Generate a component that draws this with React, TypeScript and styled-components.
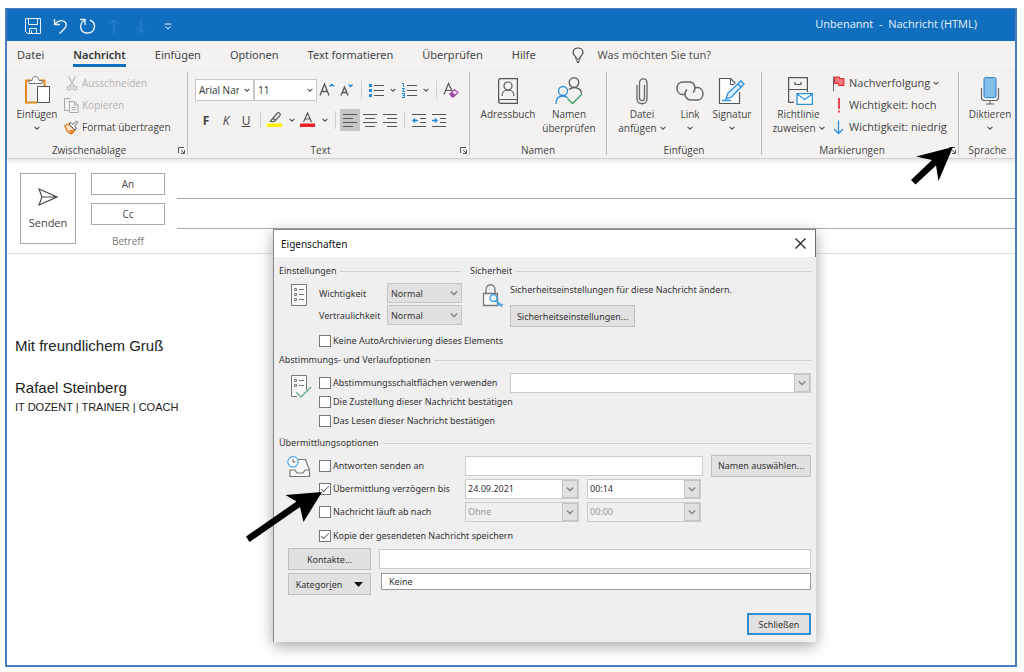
import React from 'react';
import styled, { createGlobalStyle, css } from 'styled-components';

const ui = '"Open Sans", "Noto Sans", sans-serif';
const dialogFont = '"Noto Sans", "Open Sans", sans-serif';

const GlobalStyle = createGlobalStyle`
  *, *::before, *::after { box-sizing: border-box; }
  body { margin: 0; background: #fff; font-family: ${ui}; color: #444; }
  button, input, select { font: inherit; color: inherit; margin: 0; }
`;

/* ---------- window frame ---------- */

const Page = styled.div`
  position: relative;
  min-height: 100vh;
  padding: 8px 7px 5px 5px;
  display: flex;
  overflow: hidden;
`;

const MailWindow = styled.main`
  flex: 1;
  min-width: 0;
  border: 2px solid #4a7ebb;
  border-top-width: 1px;
  background: #fff;
  display: flex;
  flex-direction: column;
`;

const TitleBar = styled.header`
  height: 32px;
  background: #106ebe;
  color: #e6f1fa;
  display: flex;
  align-items: center;
  justify-content: space-between;
  padding: 0 38px 0 16px;
  font-size: 11px;
`;

const QuickAccess = styled.div`
  display: flex;
  align-items: center;
  gap: 7px;
  padding-top: 2px;
`;

const plainButton = css`
  border: 0;
  background: none;
  padding: 0;
  display: flex;
  align-items: center;
  justify-content: center;
`;

const QuickButton = styled.button<{ $dim?: boolean }>`
  ${plainButton}
  width: 20px;
  height: 20px;
  color: ${p => (p.$dim ? '#2f84cf' : '#e6f1fa')};
`;

const WindowTitle = styled.h1`
  margin: 0;
  padding-bottom: 2px;
  font-size: 11px;
  font-weight: 400;
  line-height: 16px;
  white-space: pre;
`;

/* ---------- tabs ---------- */

const Tabs = styled.nav`
  height: 31px;
  background: #f3f2f1;
  display: flex;
  align-items: flex-start;
  padding: 6px 0 0 10px;
  gap: 29px;
  font-family: ${dialogFont};
  font-size: 11px;
  line-height: 16px;
  white-space: nowrap;
  overflow: hidden;
`;

const Tab = styled.a<{ $active?: boolean }>`
  color: ${p => (p.$active ? '#333' : '#444')};
  font-weight: ${p => (p.$active ? 600 : 400)};
  text-decoration: none;
  padding-bottom: 1px;
  border-bottom: 3px solid ${p => (p.$active ? '#106ebe' : 'transparent')};
`;

const Search = styled.a`
  display: flex;
  align-items: center;
  gap: 14px;
  margin-left: 7px;
  color: #555;
  text-decoration: none;
`;

/* ---------- ribbon ---------- */

const Ribbon = styled.section`
  height: 87px;
  flex: none;
  background: #f3f2f1;
  display: flex;
  border-bottom: 1px solid #d0cfce;
  box-shadow: 0 2px 5px rgba(0, 0, 0, 0.12);
  font-size: 10px;
`;

const Group = styled.div<{ $width?: number }>`
  ${p => (p.$width ? `flex: 0 0 ${p.$width}px;` : 'flex: 1 0 0;')}
  height: 83px;
  border-right: ${p => (p.$width ? '1px solid #bbb' : '0')};
  display: flex;
  flex-direction: column;
`;

const GroupBody = styled.div<{ $pad?: number; $gap?: number }>`
  flex: none;
  height: 71px;
  display: flex;
  align-items: flex-start;
  padding-left: ${p => p.$pad ?? 0}px;
  gap: ${p => p.$gap ?? 0}px;
`;

const GroupFooter = styled.div`
  flex: none;
  display: flex;
  align-items: center;
  line-height: 14px;
  height: 14px;
  text-align: center;
`;

const GroupName = styled.span`
  flex: 1;
`;

const Launcher = styled.button`
  ${plainButton}
  width: 16px;
  height: 12px;
  padding-left: 4px;
  color: #555;
`;

const BigButton = styled.button<{ $width: number }>`
  ${plainButton}
  flex-direction: column;
  justify-content: flex-start;
  width: ${p => p.$width}px;
  padding-top: 3px;
  line-height: 14px;
  white-space: nowrap;
`;

const BigIcon = styled.span`
  height: 32px;
  display: flex;
  align-items: center;
`;

const LabelLine = styled.span`
  display: flex;
  align-items: center;
  gap: 3px;
  height: 14px;
`;

const SmallColumn = styled.div<{ $size?: number }>`
  display: flex;
  flex-direction: column;
  font-size: ${p => p.$size ?? 10}px;
`;

const SmallButton = styled.button`
  ${plainButton}
  justify-content: flex-start;
  gap: 3px;
  height: 22px;
  line-height: 14px;
  white-space: nowrap;
  &:disabled { color: #b1b0af; }
`;

const SmallIcon = styled.span`
  width: 15px;
  display: flex;
  justify-content: center;
`;

const TextTools = styled.div`
  display: flex;
  flex-direction: column;
  padding-top: 7px;
  gap: 8px;
`;

const ToolRow = styled.div<{ $inset?: boolean }>`
  display: flex;
  align-items: center;
  height: 22px;
  padding-left: ${p => (p.$inset ? 1 : 0)}px;
`;

const Tool = styled.button<{ $narrow?: boolean; $on?: boolean }>`
  ${plainButton}
  width: ${p => (p.$narrow ? 13 : 20)}px;
  height: 22px;
  font-size: 12px;
  background: ${p => (p.$on ? '#c8c6c4' : 'none')};
`;

const Divider = styled.span`
  width: 1px;
  height: 18px;
  background: #d2d0ce;
  margin: 0 4px;
`;

const SelectWrap = styled.span<{ $width?: number }>`
  display: inline-grid;
  width: ${p => (p.$width ? `${p.$width}px` : '100%')};
  align-items: center;
  > * { grid-area: 1 / 1; }
  > svg { justify-self: end; margin-right: 4px; pointer-events: none; }
`;

const RibbonSelect = styled.select`
  appearance: none;
  width: 100%;
  height: 22px;
  border: 1px solid #c8c6c4;
  border-radius: 0;
  background: #fff;
  padding: 0 14px 0 3px;
  color: #333;
  font-size: 10px;
`;

/* ---------- message header ---------- */

const Compose = styled.section`
  display: flex;
  padding: 10px 0 0 13px;
  gap: 15px;
  border-bottom: 1px solid #e1dfdd;
`;

const SendButton = styled.button`
  width: 56px;
  height: 71px;
  margin-top: 4px;
  border: 1px solid #aaa;
  background: #fff;
  padding: 0;
  display: flex;
  flex-direction: column;
  align-items: center;
  justify-content: center;
  gap: 10px;
  font-size: 11px;
  line-height: 14px;
`;

const Fields = styled.div`
  flex: 1;
`;

const FieldRow = styled.div<{ $last?: boolean }>`
  display: flex;
  align-items: center;
  gap: 12px;
  height: ${p => (p.$last ? 24 : 30)}px;
`;

const FieldButton = styled.button`
  width: 74px;
  height: 22px;
  border: 1px solid #aaa;
  background: #fff;
  padding: 0;
  font-size: 10px;
`;

const FieldLabel = styled.label`
  width: 74px;
  text-align: center;
  font-size: 10px;
  color: #777;
`;

const FieldInput = styled.input<{ $line?: boolean }>`
  flex: 1;
  align-self: stretch;
  border: 0;
  border-bottom: ${p => (p.$line ? '1px solid #ababab' : '0')};
  background: transparent;
  outline: 0;
`;

const Message = styled.article`
  padding: 81px 8px 0;
  font-family: "Liberation Sans Narrow", "Arial Narrow", "Liberation Sans", sans-serif;
  color: #222;
`;

const Line = styled.p<{ $small?: boolean }>`
  margin: 0;
  min-height: 21px;
  font-size: ${p => (p.$small ? 11 : 15)}px;
  line-height: ${p => (p.$small ? 18 : 21)}px;
`;

/* ---------- properties dialog ---------- */

const Dialog = styled.div`
  position: absolute;
  left: 273px;
  top: 229px;
  width: 543px;
  border: 1px solid #888;
  border-width: 1px 0 0 1px;
  background: #efefef;
  box-shadow: 0 4px 14px rgba(0, 0, 0, 0.35);
  font-family: ${dialogFont};
  font-size: 9px;
  color: #333;
`;

const DialogTitle = styled.div`
  height: 27px;
  background: #fff;
  border-right: 1px solid #666;
  display: flex;
  align-items: center;
  justify-content: space-between;
  padding: 0 9px 0 7px;
`;

const DialogName = styled.h2`
  margin: 0;
  font-size: 10px;
  font-weight: 400;
  color: #111;
`;

const CloseButton = styled.button`
  ${plainButton}
  width: 12px;
  height: 12px;
  color: #222;
`;

const DialogBody = styled.form`
  padding: 6px 5px 7px 5px;
`;

const TopPair = styled.div`
  display: grid;
  grid-template-columns: 182px 1fr;
  column-gap: 9px;
`;

const Heading = styled.h3`
  margin: 0;
  height: 16px;
  display: flex;
  align-items: center;
  gap: 4px;
  font-size: 9px;
  line-height: 16px;
  font-weight: 400;
  white-space: nowrap;
  &::after { content: ''; flex: 1; height: 1px; background: #cfcfcf; }
`;

const Section = styled.div<{ $top?: number }>`
  display: flex;
  padding-top: ${p => p.$top ?? 3}px;
`;

const SectionIcon = styled.div<{ $left?: number }>`
  flex: 0 0 40px;
  padding: 2px 0 0 ${p => p.$left ?? 12}px;
`;

const Stack = styled.div`
  flex: 1;
  min-width: 0;
`;

const Pair = styled.div`
  display: grid;
  grid-template-columns: 68px 75px;
  grid-auto-rows: 22px;
  align-items: center;
  white-space: nowrap;
`;

const GraySelect = styled.select`
  appearance: none;
  width: 100%;
  height: 20px;
  border: 1px solid #c3c3c3;
  border-radius: 0;
  background: #e1e1e1;
  padding: 0 14px 0 3px;
`;

const SecurityText = styled.p`
  margin: 0 0 7px;
  line-height: 16px;
  white-space: nowrap;
`;

const PushButton = styled.button<{ $width?: number; $primary?: boolean }>`
  ${plainButton}
  width: ${p => (p.$width ? `${p.$width}px` : 'auto')};
  height: 22px;
  background: #e1e1e1;
  border: ${p => (p.$primary ? '2px solid #2f8fdb' : '1px solid #c0c0c0')};
  white-space: nowrap;
  gap: 12px;
`;

const Row = styled.div<{ $h: number; $gap?: number }>`
  display: flex;
  align-items: center;
  height: ${p => p.$h}px;
  gap: ${p => p.$gap ?? 8}px;
`;

const CheckLabel = styled.label<{ $width?: number }>`
  display: flex;
  align-items: center;
  gap: 2px;
  flex: none;
  ${p => p.$width && `width: ${p.$width}px;`}
  white-space: nowrap;
  line-height: 14px;
`;

const CheckBox = styled.input`
  appearance: none;
  width: 12px;
  height: 12px;
  border: 1px solid #777;
  background: #fff;
  display: grid;
  place-items: center;
  &:checked::before {
    content: '';
    width: 8px;
    height: 4px;
    border: solid #666;
    border-width: 0 0 1px 1px;
    transform: translateY(-1px) rotate(-45deg);
  }
`;

const TextBox = styled.input<{ $width?: number; $listed?: boolean }>`
  ${p => (p.$width ? `flex: 0 0 ${p.$width}px;` : 'flex: 1;')}
  min-width: 0;
  height: ${p => (p.$listed ? 17 : 20)}px;
  align-self: ${p => (p.$listed ? 'flex-start' : 'center')};
  border: 1px solid ${p => (p.$listed ? '#999' : '#cbcbcb')};
  background: #fff;
  padding: 0 7px;
`;

const Combo = styled.span<{ $width?: number }>`
  ${p => (p.$width ? `flex: 0 0 ${p.$width}px;` : 'flex: 1;')}
  min-width: 0;
  height: 20px;
  border: 1px solid #cbcbcb;
  display: flex;
  background: #fff;
  &:has(input:disabled) { background: #efefef; }
`;

const ComboInput = styled.input`
  flex: 1;
  min-width: 0;
  border: 0;
  padding: 0 2px;
  background: transparent;
  outline: 0;
  &:disabled { color: #999; }
`;

const ComboButton = styled.button`
  ${plainButton}
  flex: 0 0 16px;
  background: #e1e1e1;
  border: 1px solid #c3c3c3;
`;

const Linked = styled.div`
  padding: 0 0 0 9px;
  display: flex;
  flex-direction: column;
  gap: 3px;
`;

const DialogFooter = styled.div`
  display: flex;
  justify-content: flex-end;
  margin-top: 18px;
`;

const Pointer = styled.svg`
  position: absolute;
  pointer-events: none;
  fill: #000;
`;

/* ---------- small drawings ---------- */

const Chevron = ({ size = 6, color = '#555' }: { size?: number; color?: string }) => (
  <svg width={size} height={size} viewBox="0 0 6 6" fill="none" stroke={color} strokeWidth="1.1">
    <path d="M0.6 1.8 3 4.2 5.4 1.8" />
  </svg>
);

const LaunchIcon = () => (
  <svg width="9" height="9" viewBox="0 0 9 9" fill="none" stroke="currentColor">
    <path d="M1.5 7V1.5H7M4 4l3.5 3.5M7.500 4v3.500H4" />
  </svg>
);

const lineRows = {
  left: 'M0 1.500h14M0 5.500h10M0 9.500h14M0 13.500h10',
  center: 'M0 1.500h14M2 5.500h10M0 9.500h14M2 13.500h10',
  right: 'M0 1.500h14M4 5.500h10M0 9.500h14M4 13.500h10',
  out: 'M0 1.500h14M8 5.500h6M8 9.500h6M0 13.500h14',
  in: 'M0 1.500h14M8 5.500h6M8 9.500h6M0 13.500h14',
};

const Lines = ({ kind }: { kind: keyof typeof lineRows }) => (
  <svg width="14" height="15" viewBox="0 0 14 15" fill="none" stroke="#555">
    <path d={lineRows[kind]} />
    {kind === 'out' && <path d="M6 7.500H1M3 5.500l-2 2 2 2" stroke="#1e88d8" strokeWidth="1.3" />}
    {kind === 'in' && <path d="M0 7.500h5M3 5.500l2 2-2 2" stroke="#1e88d8" strokeWidth="1.3" />}
  </svg>
);

const ListIcon = ({ check }: { check?: boolean }) => (
  <svg width="22" height="24" viewBox="0 0 22 24" fill="none" stroke="#777">
    <path d={check ? 'M6 21.500H0.500V0.500h15V15' : 'M0.500 0.500h15v21H0.500z'} fill="#f8f8f8" />
    <path d="M3.500 4.500h2v2h-2zM3.500 9.500h2v2h-2zM8 5.500h5M8 10.500h5" />
    {check ? (
      <path d="M5 17l5 5L20 12" stroke="#6db68a" strokeWidth="1.5" />
    ) : (
      <path d="M3.500 14.500h2v2h-2zM8 15.500h5" />
    )}
  </svg>
);

const Launch = ({ name }: { name: string }) => (
  <Launcher type="button" aria-label={name}><LaunchIcon /></Launcher>
);

type ComboFieldProps = { width?: number; value: string; label: string; disabled?: boolean };
const ComboField = ({ width, value, label, disabled }: ComboFieldProps) => (
  <Combo $width={width}>
    <ComboInput aria-label={label} defaultValue={value} disabled={disabled} />
    <ComboButton type="button" aria-label={`${label} öffnen`}><Chevron size={8} color="#888" /></ComboButton>
  </Combo>
);

type CheckProps = { children: React.ReactNode; checked?: boolean; width?: number };
const Check = ({ children, checked, width }: CheckProps) => (
  <CheckLabel $width={width}>
    <CheckBox type="checkbox" defaultChecked={checked} />
    {children}
  </CheckLabel>
);

const tabs = ['Datei', 'Nachricht', 'Einfügen', 'Optionen', 'Text formatieren', 'Überprüfen', 'Hilfe'];

const MailRibbon = () => (
  <Ribbon>
    <Group $width={181}>
      <GroupBody $pad={6} $gap={3}>
        <BigButton type="button" $width={48}>
          <BigIcon>
            <svg width="28" height="32" viewBox="0 0 28 32" fill="none">
              <path d="M8 5.500H3v22h11M17 5.500h4.500V11" stroke="#e08a1e" strokeWidth="2" />
              <path d="M6 8.500V5.500h3C9 3 10.500 1.500 12.500 1.500s3.500 1.500 3.500 4h3v3z" fill="#fff" stroke="#777" />
              <path d="M14.500 11.500h12v16h-12z" fill="#fff" stroke="#555" />
            </svg>
          </BigIcon>
          <LabelLine>Einfügen</LabelLine>
          <LabelLine><Chevron /></LabelLine>
        </BigButton>
        <SmallColumn>
          <SmallButton type="button" disabled>
            <SmallIcon>
              <svg width="12" height="15" viewBox="0 0 12 15" fill="none" stroke="#aaa">
                <path d="M2.500 0.500 8 10.500M9.500 0.500 4 10.500" />
                <circle cx="3" cy="12" r="2" /><circle cx="9" cy="12" r="2" />
              </svg>
            </SmallIcon>
            Ausschneiden
          </SmallButton>
          <SmallButton type="button" disabled>
            <SmallIcon>
              <svg width="15" height="15" viewBox="0 0 15 15" fill="none" stroke="#aaa">
                <path d="M5 12.500H0.500V0.500h6M4.500 3.500h6l3.500 3.500v7.500H5.500V3.500M10.500 3.500V7H14M7.500 9.500h4M7.500 11.500h4" />
              </svg>
            </SmallIcon>
            Kopieren
          </SmallButton>
          <SmallButton type="button">
            <SmallIcon>
              <svg width="15" height="15" viewBox="0 0 15 15" fill="none">
                <path d="M1 5.500 5 4l6 6-3.500 4C4 13 2 10 1 5.500z" fill="#fbe3c2" stroke="#d9761c" strokeWidth="1.3" />
                <path d="M5 10l2 3.500 3-3.500z" fill="#e8821e" />
                <path d="M5 4l2-1.500 2 2L12.500 1 14 2.500 10.500 6l2 2L11 10z" fill="#fff" stroke="#555" />
              </svg>
            </SmallIcon>
            Format übertragen
          </SmallButton>
        </SmallColumn>
      </GroupBody>
      <GroupFooter><GroupName>Zwischenablage</GroupName><Launch name="Zwischenablage öffnen" /></GroupFooter>
    </Group>

    <Group $width={282}>
      <GroupBody $pad={7}>
        <TextTools>
          <ToolRow>
            <SelectWrap $width={59}>
              <RibbonSelect aria-label="Schriftart"><option>Arial Narrow</option></RibbonSelect>
              <Chevron />
            </SelectWrap>
            <SelectWrap $width={63}>
              <RibbonSelect aria-label="Schriftgrad"><option>11</option></RibbonSelect>
              <Chevron />
            </SelectWrap>
            <Tool type="button" aria-label="Schrift vergrößern">
              <svg width="16" height="16" viewBox="0 0 16 16" fill="none" stroke="#555" strokeWidth="1.300">
                <path d="M1 13.500 5.500 2 10 13.500M2.500 9.500h6" />
                <path d="M10.500 4.500l2.200-2.200 2.200 2.200" stroke="#1e88d8" />
              </svg>
            </Tool>
            <Tool type="button" aria-label="Schrift verkleinern">
              <svg width="16" height="16" viewBox="0 0 16 16" fill="none" stroke="#555" strokeWidth="1.300">
                <path d="M2 13.500 5.500 5 9 13.500M3.200 10.500h4.600" />
                <path d="M9.500 2.500l2 2 2-2" stroke="#1e88d8" />
              </svg>
            </Tool>
            <Divider />
            <Tool type="button" aria-label="Aufzählungszeichen">
              <svg width="15" height="15" viewBox="0 0 15 15" fill="none">
                <path d="M5 2.500h10M5 7.500h10M5 12.500h10" stroke="#555" />
                <path d="M0 1h3v3H0zM0 6h3v3H0zM0 11h3v3H0z" fill="#1e88d8" />
              </svg>
            </Tool>
            <Tool type="button" $narrow aria-label="Aufzählung wählen"><Chevron /></Tool>
            <Tool type="button" aria-label="Nummerierung">
              <svg width="15" height="15" viewBox="0 0 15 15" fill="none">
                <path d="M5 2.500h10M5 7.500h10M5 12.500h10" stroke="#555" />
                <path d="M0 0.500h1.500V4M0 5.500h2.500L0.500 8.500H3M0 10.500h2.500v4H0M0.500 12.500h2" stroke="#1e88d8" />
              </svg>
            </Tool>
            <Tool type="button" $narrow aria-label="Nummerierung wählen"><Chevron /></Tool>
            <Divider />
            <Tool type="button" aria-label="Formatierung löschen">
              <svg width="16" height="16" viewBox="0 0 16 16" fill="none" stroke="#555" strokeWidth="1.200">
                <path d="M1 12.500 5.500 1.500 9 9M2.500 8.500h5.500" />
                <path d="M7 12l4.500-4.500 3.500 3L10.500 15H9z" stroke="#a349a4" fill="#f3e4f3" />
                <path d="M7 12l2-2 3.500 3-2 2H9z" fill="#a349a4" stroke="none" />
              </svg>
            </Tool>
          </ToolRow>
          <ToolRow $inset>
            <Tool type="button"><b>F</b></Tool>
            <Tool type="button"><i>K</i></Tool>
            <Tool type="button"><u>U</u></Tool>
            <Divider />
            <Tool type="button" aria-label="Texthervorhebung">
              <svg width="16" height="16" viewBox="0 0 16 16" fill="none">
                <path d="M4 8.500 10.500 1c1-1 3.500 0.500 2.500 2.500L7.500 9.500H3.500L4 8.500M6 6.500l3 2" stroke="#555" strokeWidth="1.200" />
                <path d="M0 11.500h15V15H0z" fill="#fff200" />
              </svg>
            </Tool>
            <Tool type="button" $narrow aria-label="Hervorhebungsfarbe"><Chevron /></Tool>
            <Tool type="button" aria-label="Schriftfarbe">
              <svg width="16" height="16" viewBox="0 0 16 16" fill="none">
                <path d="M3.500 10 7.500 1 11.500 10M5 7h5" stroke="#555" strokeWidth="1.200" />
                <path d="M0 11.500h15V15H0z" fill="#ee1c24" />
              </svg>
            </Tool>
            <Tool type="button" $narrow aria-label="Farbe wählen"><Chevron /></Tool>
            <Divider />
            <Tool type="button" $on aria-label="Linksbündig"><Lines kind="left" /></Tool>
            <Tool type="button" aria-label="Zentriert"><Lines kind="center" /></Tool>
            <Tool type="button" aria-label="Rechtsbündig"><Lines kind="right" /></Tool>
            <Divider />
            <Tool type="button" aria-label="Einzug verkleinern"><Lines kind="out" /></Tool>
            <Tool type="button" aria-label="Einzug vergrößern"><Lines kind="in" /></Tool>
          </ToolRow>
        </TextTools>
      </GroupBody>
      <GroupFooter><GroupName>Text</GroupName><Launch name="Textoptionen öffnen" /></GroupFooter>
    </Group>

    <Group $width={137}>
      <GroupBody $pad={7}>
        <BigButton type="button" $width={62}>
          <BigIcon>
            <svg width="20" height="26" viewBox="0 0 20 26" fill="none" stroke="#555" strokeWidth="1.200">
              <path d="M19.400 21.500V0.600H3Q0.600 0.600 0.600 3V23Q0.600 25.400 3 25.400H19.400V21.500H3Q0.600 21.500 0.600 23" />
              <circle cx="10" cy="8" r="4" />
              <path d="M4 18c0-8 12-8 12 0" />
            </svg>
          </BigIcon>
          <LabelLine>Adressbuch</LabelLine>
        </BigButton>
        <BigButton type="button" $width={60}>
          <BigIcon>
            <svg width="28" height="28" viewBox="0 0 28 28" fill="none" strokeWidth="1.300">
              <circle cx="19" cy="5.500" r="4.800" stroke="#555" />
              <path d="M14 12.500c4-3.500 12-2 12.500 4" stroke="#555" />
              <circle cx="8" cy="14" r="4.500" stroke="#2a8fdc" />
              <path d="M1 27c0-5 2.500-8 7-8 2 0 3.500 0.500 4.500 2" stroke="#2a8fdc" />
              <path d="M12.500 21.500l5 5L27 17" stroke="#3a9a5f" />
            </svg>
          </BigIcon>
          <LabelLine>Namen</LabelLine>
          <LabelLine>überprüfen</LabelLine>
        </BigButton>
      </GroupBody>
      <GroupFooter><GroupName>Namen</GroupName></GroupFooter>
    </Group>

    <Group $width={155}>
      <GroupBody $pad={8}>
        <BigButton type="button" $width={54}>
          <BigIcon>
            <svg width="12" height="27" viewBox="0 0 12 27" fill="none" stroke="#666" strokeWidth="1.300">
              <path d="M8.500 7v13c0 3.500-5 3.500-5 0V5c0-5.500 7.500-5.500 7.500 0v15.500c0 7-10 7-10 0V7" />
            </svg>
          </BigIcon>
          <LabelLine>Datei</LabelLine>
          <LabelLine>anfügen<Chevron /></LabelLine>
        </BigButton>
        <BigButton type="button" $width={42}>
          <BigIcon>
            <svg width="28" height="20" viewBox="0 0 28 20" fill="none" stroke="#666" strokeWidth="1.500">
              <path d="M9 13.500H7C-1 13.500-1 1 7 1h6c6 0 7.500 7 4 10.500" />
              <path d="M18 6.500h3c8 0 8 12.500 0 12.500h-6c-6 0-7.500-7-4-10.500" />
            </svg>
          </BigIcon>
          <LabelLine>Link</LabelLine>
          <LabelLine><Chevron /></LabelLine>
        </BigButton>
        <BigButton type="button" $width={42}>
          <BigIcon>
            <svg width="28" height="28" viewBox="0 0 28 28" fill="none">
              <path d="M21.500 15V26.500H1.500V1.500h11l5 5" fill="#fff" stroke="#555" strokeWidth="1.200" />
              <path d="M12.500 1.500v6h4" stroke="#555" />
              <path d="M8 22l2-6L23 4l3 3L13.500 20z" fill="#d9ecfa" stroke="#2a8fdc" strokeWidth="1.300" />
              <path d="M4 23.500h9M20 7l3 3" stroke="#2a8fdc" strokeWidth="1.300" />
            </svg>
          </BigIcon>
          <LabelLine>Signatur</LabelLine>
          <LabelLine><Chevron /></LabelLine>
        </BigButton>
      </GroupBody>
      <GroupFooter><GroupName>Einfügen</GroupName></GroupFooter>
    </Group>

    <Group $width={197}>
      <GroupBody $pad={8} $gap={4}>
        <BigButton type="button" $width={57}>
          <BigIcon>
            <svg width="28" height="28" viewBox="0 0 28 28" fill="none">
              <path d="M9 25.400H3.600V0.600h18.800V15M3.600 12.500h18.800M10 5v2.500h6V5" fill="none" stroke="#555" strokeWidth="1.200" />
              <path d="M12 16.600h15.400v10.800H12z" fill="#fff" stroke="#2a8fdc" strokeWidth="1.300" />
              <path d="M12 17l7.700 5.500L27.400 17" stroke="#2a8fdc" strokeWidth="1.300" />
            </svg>
          </BigIcon>
          <LabelLine>Richtlinie</LabelLine>
          <LabelLine>zuweisen<Chevron /></LabelLine>
        </BigButton>
        <SmallColumn $size={11}>
          <SmallButton type="button">
            <SmallIcon>
              <svg width="12" height="15" viewBox="0 0 12 15">
                <path d="M0.500 0.500V15" stroke="#666" />
                <path d="M1.500 1h5v1.500H11V9.500H5.500V7.500h-4z" fill="#f4777b" stroke="#e3242b" />
              </svg>
            </SmallIcon>
            Nachverfolgung<Chevron />
          </SmallButton>
          <SmallButton type="button">
            <SmallIcon>
              <svg width="4" height="15" viewBox="0 0 4 15" fill="#f0484d"><path d="M1 0h2v11H1zM1 12.500h2v2H1z" /></svg>
            </SmallIcon>
            Wichtigkeit: hoch
          </SmallButton>
          <SmallButton type="button">
            <SmallIcon>
              <svg width="11" height="15" viewBox="0 0 11 15" fill="none" stroke="#2a8fdc" strokeWidth="1.300">
                <path d="M5.500 0.500v13M1 9l4.500 4.500L10 9" />
              </svg>
            </SmallIcon>
            Wichtigkeit: niedrig
          </SmallButton>
        </SmallColumn>
      </GroupBody>
      <GroupFooter><GroupName>Markierungen</GroupName><Launch name="Nachrichtenoptionen" /></GroupFooter>
    </Group>

    <Group>
      <GroupBody $pad={5}>
        <BigButton type="button" $width={52}>
          <BigIcon>
            <svg width="20" height="28" viewBox="0 0 20 28" fill="none">
              <rect x="4" y="0.600" width="12" height="20" rx="1.500" fill="#83bdea" stroke="#2a7fc8" />
              <path d="M1.500 11v9.500q0 3 3 3h11q3 0 3-3V11M10 23.500v3M6 27h8" stroke="#666" strokeWidth="1.200" />
            </svg>
          </BigIcon>
          <LabelLine>Diktieren</LabelLine>
          <LabelLine><Chevron /></LabelLine>
        </BigButton>
      </GroupBody>
      <GroupFooter><GroupName>Sprache</GroupName></GroupFooter>
    </Group>
  </Ribbon>
);

const PropertiesDialog = () => (
  <Dialog role="dialog" aria-labelledby="dialog-title">
    <DialogTitle>
      <DialogName id="dialog-title">Eigenschaften</DialogName>
      <CloseButton type="button" aria-label="Fenster schließen">
        <svg width="11" height="11" viewBox="0 0 11 11" stroke="currentColor" strokeWidth="1.200"><path d="M0.500 0.500l10 10M10.500 0.500l-10 10" /></svg>
      </CloseButton>
    </DialogTitle>
    <DialogBody onSubmit={e => e.preventDefault()}>
      <TopPair>
        <div>
          <Heading>Einstellungen</Heading>
          <Section>
            <SectionIcon><ListIcon /></SectionIcon>
            <Stack>
              <Pair>
                <label htmlFor="importance">Wichtigkeit</label>
                <SelectWrap>
                  <GraySelect id="importance"><option>Normal</option></GraySelect>
                  <Chevron size={8} color="#888" />
                </SelectWrap>
                <label htmlFor="sensitivity">Vertraulichkeit</label>
                <SelectWrap>
                  <GraySelect id="sensitivity"><option>Normal</option></GraySelect>
                  <Chevron size={8} color="#888" />
                </SelectWrap>
              </Pair>
            </Stack>
          </Section>
        </div>
        <div>
          <Heading>Sicherheit</Heading>
          <Section>
            <SectionIcon>
              <svg width="21" height="24" viewBox="0 0 21 24" fill="none">
                <path d="M4 9.500V6c0-7 9-7 9 0v3.500" stroke="#777" strokeWidth="1.300" />
                <path d="M1.500 9.500h14v12h-14z" fill="#fafafa" stroke="#777" strokeWidth="1.300" />
                <circle cx="11.500" cy="14" r="3.500" fill="#e4f2fc" stroke="#4aa3e0" strokeWidth="1.500" />
                <path d="M14 16.500l6 6M17 19.500l-1.500 2M19 21.500l1.500-1.500" stroke="#4aa3e0" strokeWidth="1.800" />
              </svg>
            </SectionIcon>
            <Stack>
              <SecurityText>Sicherheitseinstellungen für diese Nachricht ändern.</SecurityText>
              <PushButton type="button" $width={125}>Sicherheitseinstellungen...</PushButton>
            </Stack>
          </Section>
        </div>
      </TopPair>
      <Section>
        <SectionIcon />
        <Row $h={22}><Check>Keine AutoArchivierung dieses Elements</Check></Row>
      </Section>

      <Heading>Abstimmungs- und Verlaufoptionen</Heading>
      <Section $top={5}>
        <SectionIcon><ListIcon check /></SectionIcon>
        <Stack>
          <Row $h={19} $gap={0}>
            <Check width={191}>Abstimmungsschaltflächen verwenden</Check>
            <ComboField value="" label="Abstimmungsschaltflächen" />
          </Row>
          <Row $h={19}><Check>Die Zustellung dieser Nachricht bestätigen</Check></Row>
          <Row $h={19}><Check>Das Lesen dieser Nachricht bestätigen</Check></Row>
        </Stack>
      </Section>

      <Section $top={5}>
        <Stack><Heading>Übermittlungsoptionen</Heading></Stack>
      </Section>
      <Section>
        <SectionIcon $left={8}>
          <svg width="24" height="22" viewBox="0 0 24 22" fill="none">
            <path d="M3 14V20.500H22.500V14L18.500 3.500H9M3 14h5l2 3h6l2-3h4.500" fill="#f8f8f8" stroke="#777" strokeWidth="1.200" />
            <circle cx="6" cy="5.800" r="5.200" fill="#fff" stroke="#5aade6" strokeWidth="1.300" />
            <path d="M6 3v3h2.500" stroke="#555" />
          </svg>
        </SectionIcon>
        <Stack>
          <Row $h={23} $gap={0}>
            <Check width={146}>Antworten senden an</Check>
            <Row $h={23}>
              <TextBox $width={238} aria-label="Antworten senden an" />
              <PushButton type="button" $width={100}>Namen auswählen...</PushButton>
            </Row>
          </Row>
          <Row $h={23} $gap={0}>
            <Check width={146} checked>Übermittlung verzögern bis</Check>
            <Row $h={23}>
              <ComboField width={114} value="24.09.2021" label="Datum der Übermittlung" />
              <ComboField width={114} value="00:14" label="Uhrzeit der Übermittlung" />
            </Row>
          </Row>
          <Row $h={23} $gap={0}>
            <Check width={146}>Nachricht läuft ab nach</Check>
            <Row $h={23}>
              <ComboField width={114} value="Ohne" label="Ablaufdatum" disabled />
              <ComboField width={114} value="00:00" label="Ablaufzeit" disabled />
            </Row>
          </Row>
          <Row $h={25}><Check checked>Kopie der gesendeten Nachricht speichern</Check></Row>
        </Stack>
      </Section>
      <Linked>
        <Row $h={22}>
          <PushButton type="button" $width={83}>Kontakte...</PushButton>
          <TextBox aria-label="Kontakte" />
        </Row>
        <Row $h={22} $gap={10}>
          <PushButton type="button" $width={83}>
            <span>Kategor<u>i</u>en</span>
            <svg width="9" height="5" viewBox="0 0 9 5"><path d="M0 0h9L4.500 5z" fill="#111" /></svg>
          </PushButton>
          <TextBox $listed aria-label="Kategorien" defaultValue="Keine" />
        </Row>
      </Linked>
      <DialogFooter>
        <PushButton type="button" $width={64} $primary>Schließen</PushButton>
      </DialogFooter>
    </DialogBody>
  </Dialog>
);

export default function App() {
  return (
    <Page>
      <GlobalStyle />
      <MailWindow>
        <TitleBar>
          <QuickAccess>
            <QuickButton type="button" aria-label="Speichern">
              <svg width="16" height="16" viewBox="0 0 16 16" fill="none" stroke="currentColor">
                <path d="M0.500 0.500h15v15H2.500l-2-2zM3.500 0.500v6h9v-6M4.500 15.500v-5h7v5M6.500 12.500v3" />
              </svg>
            </QuickButton>
            <QuickButton type="button" aria-label="Rückgängig">
              <svg width="15" height="16" viewBox="0 0 15 16" fill="none" stroke="currentColor" strokeWidth="1.400">
                <path d="M1.500 1v5.500H7M1.500 6.500C5 2 10 1.500 12.500 4.500c2 3 0 5.500-6 11" />
              </svg>
            </QuickButton>
            <QuickButton type="button" aria-label="Wiederholen">
              <svg width="17" height="16" viewBox="0 0 17 16" fill="none" stroke="currentColor" strokeWidth="1.400">
                <path d="M1 1.500h5V7M6 2C-0.500 5.500 0.500 15 8.500 15c8 0 9.500-10 2.500-13" />
              </svg>
            </QuickButton>
            <QuickButton type="button" $dim aria-label="Vorheriges Element">
              <svg width="12" height="15" viewBox="0 0 12 15" fill="none" stroke="currentColor"><path d="M6 15V1M1.500 5.500 6 1l4.500 4.500" /></svg>
            </QuickButton>
            <QuickButton type="button" $dim aria-label="Nächstes Element">
              <svg width="12" height="15" viewBox="0 0 12 15" fill="none" stroke="currentColor"><path d="M6 0v14M1.500 9.500 6 14l4.500-4.500" /></svg>
            </QuickButton>
            <QuickButton type="button" aria-label="Symbolleiste anpassen">
              <svg width="8" height="7" viewBox="0 0 8 7" fill="none" stroke="currentColor"><path d="M0.500 1h7M1.500 3.500 4 6l2.500-2.500" /></svg>
            </QuickButton>
          </QuickAccess>
          <WindowTitle>{'Unbenannt  -  Nachricht (HTML)'}</WindowTitle>
        </TitleBar>
        <Tabs>
          {tabs.map(tab => (
            <Tab key={tab} href="#" $active={tab === 'Nachricht'}>{tab}</Tab>
          ))}
          <Search href="#">
            <svg width="12" height="16" viewBox="0 0 12 16" fill="none" stroke="#444" strokeWidth="1.200">
              <path d="M4 12V10.500C3.500 9 1 8 1 5.500 1 -0.500 11 -0.500 11 5.500 11 8 8.500 9 8 10.500V12zM4 14h4M5 15.500h2" />
            </svg>
            Was möchten Sie tun?
          </Search>
        </Tabs>
        <MailRibbon />
        <Compose>
          <SendButton type="button">
            <svg width="20" height="18" viewBox="0 0 20 18" fill="none" stroke="#444" strokeWidth="1.100">
              <path d="M1 1l18 8L1 17l3-8zM4 9h15" />
            </svg>
            Senden
          </SendButton>
          <Fields>
            <FieldRow>
              <FieldButton type="button">An</FieldButton>
              <FieldInput $line aria-label="An" />
            </FieldRow>
            <FieldRow>
              <FieldButton type="button">Cc</FieldButton>
              <FieldInput $line aria-label="Cc" />
            </FieldRow>
            <FieldRow $last>
              <FieldLabel htmlFor="subject">Betreff</FieldLabel>
              <FieldInput id="subject" />
            </FieldRow>
          </Fields>
        </Compose>
        <Message>
          <Line>Mit freundlichem Gruß</Line>
          <Line />
          <Line>Rafael Steinberg</Line>
          <Line $small>IT DOZENT | TRAINER | COACH</Line>
        </Message>
      </MailWindow>
      <PropertiesDialog />
      <Pointer style={{ left: 910, top: 146 }} width="44" height="40" viewBox="910 146 44 40">
        <path d="M953 147 916 156.500 932 160 911 180 915.500 184.500 936 165.500 938.500 181z" />
      </Pointer>
      <Pointer style={{ left: 244, top: 490 }} width="80" height="54" viewBox="244 490 80 54">
        <path d="M322 492 285.500 495 296.500 501.500 246 536.500 249.500 542 300 507 303.500 522z" />
      </Pointer>
    </Page>
  );
}
